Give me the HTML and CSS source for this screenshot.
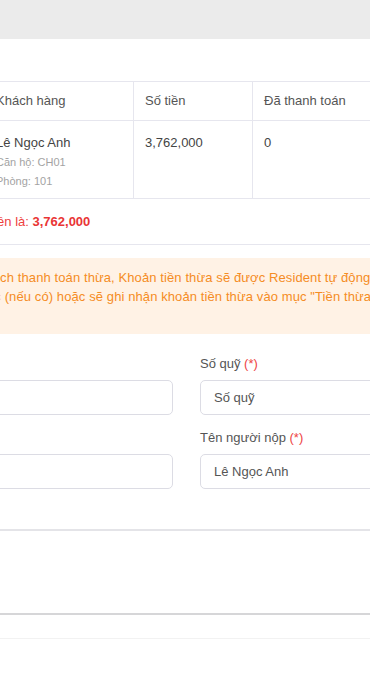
FILE: index.html
```html
<!DOCTYPE html>
<html lang="vi">
<head>
  <meta charset="UTF-8" />
  <meta name="viewport" content="width=device-width, initial-scale=1.0"/>
  <title>Phiếu thu</title>
  <link rel="stylesheet" href="styles.css">
</head>
<body>
  <div class="topbar"></div>

  <div class="panel">
    <table class="bills">
      <colgroup>
        <col style="width:44px">
        <col style="width:149px">
        <col style="width:119px">
        <col style="width:119px">
        <col>
      </colgroup>
      <thead>
        <tr>
          <th>STT</th>
          <th>Khách hàng</th>
          <th>Số tiền</th>
          <th>Đã thanh toán</th>
          <th>Còn nợ</th>
        </tr>
      </thead>
      <tbody>
        <tr>
          <td>1</td>
          <td>
            <div class="name">Lê Ngọc Anh</div>
            <div class="sub">Căn hộ: CH01</div>
            <div class="sub">Phòng: 101</div>
          </td>
          <td class="num">3,762,000</td>
          <td class="num">0</td>
          <td class="num">3,762,000</td>
        </tr>
      </tbody>
    </table>

    <div class="total">Tổng số tiền là: <b>3,762,000</b></div>

    <div class="notice">
      Nếu khách thanh toán thừa, Khoản tiền thừa sẽ được Resident tự động trừ vào các khoản<br>
      phí khác (nếu có) hoặc sẽ ghi nhận khoản tiền thừa vào mục "Tiền thừa" của khách hàng.
    </div>

    <div class="form">
      <div class="field">
        <label>Ngày (*)</label>
        <input type="text" value="">
      </div>
      <div class="field">
        <label>Số quỹ <span class="req">(*)</span></label>
        <input type="text" value="Số quỹ">
      </div>
      <div class="field">
        <label>Loại (*)</label>
        <input type="text" value="">
      </div>
      <div class="field">
        <label>Tên người nộp <span class="req">(*)</span></label>
        <input type="text" value="Lê Ngọc Anh">
      </div>
    </div>

    <div class="note">
      <label>Ghi chú</label>
      <div class="note-box"></div>
    </div>

    <div class="footer"></div>
  </div>
</body>
</html>
```

FILE: styles.css
```css
body {
  margin: 0;
  width: 370px;
  overflow: hidden;
  background: #fff;
  font-family: 'Liberation Sans', Arial, sans-serif;
  font-size: 13px;
  color: #444;
}

.topbar {
  height: 39px;
  background: #ebebeb;
}

.panel {
  margin-left: -60px;
  width: 640px;
  padding-top: 42px;
}

.bills {
  width: 100%;
  table-layout: fixed;
  border-collapse: collapse;
}

.bills th,
.bills td {
  border: 1px solid #e6e6ee;
  text-align: left;
  vertical-align: top;
  white-space: nowrap;
}

.bills th {
  padding: 10px 11px;
  line-height: 18px;
  font-weight: normal;
  color: #555;
}

.bills td {
  padding: 12px 11px 7px;
  line-height: 20px;
}

.name {
  color: #444;
}

.sub {
  font-size: 11px;
  line-height: 19px;
  color: #a3a3a3;
}

.total {
  height: 45px;
  line-height: 45px;
  border-bottom: 1px solid #e6e6ee;
  color: #ee3f3f;
}

.total b {
  color: #e93535;
}

.notice {
  margin-top: 13px;
  padding: 10px 11px 28px;
  background: #fff2e5;
  color: #f58c24;
  line-height: 19px;
  letter-spacing: 0.1px;
  white-space: nowrap;
}

.form {
  margin-top: 21px;
  display: grid;
  grid-template-columns: 233px 233px;
  column-gap: 27px;
  row-gap: 14px;
}

.field label {
  display: block;
  line-height: 18px;
  margin-bottom: 7px;
  color: #555;
}

.req {
  color: #ee4444;
}

.field input {
  display: block;
  width: 100%;
  box-sizing: border-box;
  height: 35px;
  padding: 0 13px;
  border: 1px solid #dcdce4;
  border-radius: 5px;
  font-family: inherit;
  font-size: 13px;
  color: #555;
  background: #fff;
}

.note {
  margin-top: 22px;
}

.note label {
  display: block;
  line-height: 18px;
}

.note-box {
  height: 82px;
  border-top: 2px solid #e4e4e8;
  border-bottom: 2px solid #d6d6d8;
}

.footer {
  height: 23px;
  border-bottom: 1px solid #f2f2f2;
}
```
